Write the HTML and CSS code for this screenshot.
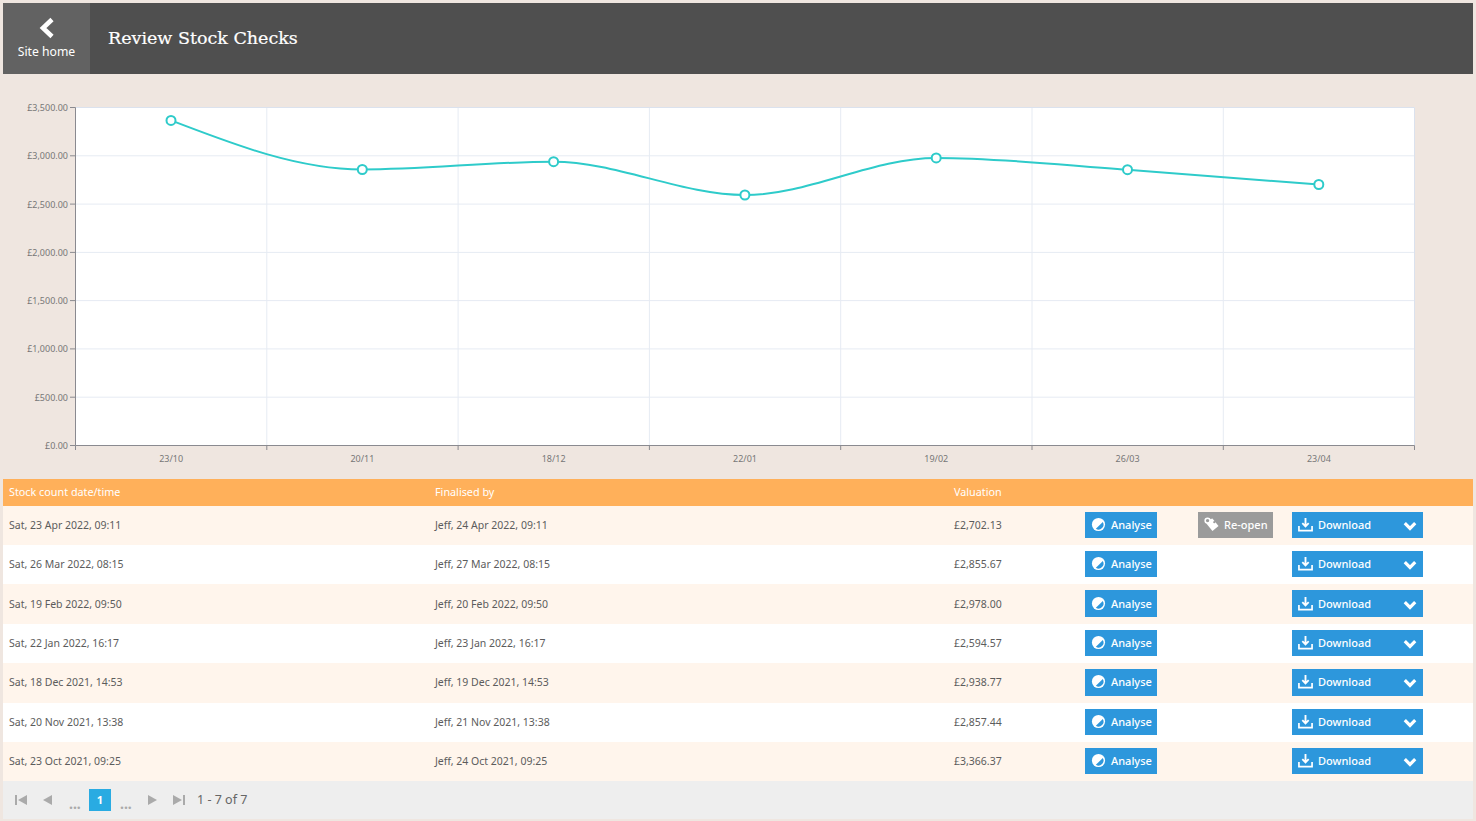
FILE: index.html
```html
<!DOCTYPE html>
<html lang="en">
<head>
<meta charset="utf-8">
<title>Review Stock Checks</title>
<link rel="stylesheet" href="styles.css">
</head>
<body>
<svg class="defs" width="0" height="0" aria-hidden="true">
  <symbol id="i-analyse" viewBox="0 0 16 16"><circle cx="8" cy="8" r="7" fill="#fff"/><path d="M12.6 5.2A5.4 5.4 0 0 1 5.2 12.6Z" fill="#2d97dc"/></symbol>
  <symbol id="i-tags" viewBox="0 0 16 16"><path d="M5 3 9 1.5 15.5 9.5 9 15 2.5 7Z" fill="#fff"/><circle cx="3.8" cy="3.8" r="2.6" fill="#9b9b9b" stroke="#fff" stroke-width="1.6"/><circle cx="11" cy="5.5" r="1.2" fill="#9b9b9b"/></symbol>
  <symbol id="i-download" viewBox="0 0 16 16"><path d="M8 1V9.5M4.6 6.6 8 10 11.4 6.6" fill="none" stroke="#fff" stroke-width="2"/><path d="M1 9.5V14.5H15V9.5" fill="none" stroke="#fff" stroke-width="1.8"/></symbol>
  <symbol id="i-chevron" viewBox="0 0 14 10"><path d="M1.8 2.2 7 7.4 12.2 2.2" fill="none" stroke="#fff" stroke-width="3.2"/></symbol>
</svg>

<header class="topbar">
  <a class="home" href="#">
    <svg class="home-icon" viewBox="0 0 16 22" width="16" height="22"><path d="M13 2.5 4 11 13 19.5" fill="none" stroke="#fff" stroke-width="4.6"/></svg>
    <span>Site home</span>
  </a>
  <h1 class="title">Review Stock Checks</h1>
</header>

<section class="chart">
  <svg class="chart-svg" width="1470" height="405" viewBox="3 74 1470 405">
    <rect class="plot" x="75.5" y="107.5" width="1339" height="338"/>
    <g class="grid">
      <path d="M75.5 155.8H1414.5M75.5 204.1H1414.5M75.5 252.4H1414.5M75.5 300.6H1414.5M75.5 348.9H1414.5M75.5 397.2H1414.5"/>
      <path d="M266.8 107.5V445.5M458.1 107.5V445.5M649.4 107.5V445.5M840.7 107.5V445.5M1032 107.5V445.5M1223.3 107.5V445.5"/>
      <path class="edge" d="M75.5 107.5H1414.5V445.5"/>
    </g>
    <g class="axis">
      <path d="M75.5 107.5V445.5H1414.5"/>
      <path d="M70 107.5H75.5M70 155.8H75.5M70 204.1H75.5M70 252.4H75.5M70 300.6H75.5M70 348.9H75.5M70 397.2H75.5M70 445.5H75.5"/>
      <path d="M75.5 445.5V450M266.8 445.5V450M458.1 445.5V450M649.4 445.5V450M840.7 445.5V450M1032 445.5V450M1223.3 445.5V450M1414.5 445.5V450"/>
    </g>
    <g class="ylabels">
      <text x="68" y="111">£3,500.00</text>
      <text x="68" y="159">£3,000.00</text>
      <text x="68" y="208">£2,500.00</text>
      <text x="68" y="256">£2,000.00</text>
      <text x="68" y="304">£1,500.00</text>
      <text x="68" y="352">£1,000.00</text>
      <text x="68" y="401">£500.00</text>
      <text x="68" y="449">£0.00</text>
    </g>
    <g class="xlabels">
      <text x="171.2" y="462">23/10</text>
      <text x="362.4" y="462">20/11</text>
      <text x="553.7" y="462">18/12</text>
      <text x="745" y="462">22/01</text>
      <text x="936.3" y="462">19/02</text>
      <text x="1127.6" y="462">26/03</text>
      <text x="1318.9" y="462">23/04</text>
    </g>
    <path class="line" d="M171 120.4C234.77 144.95 298.53 169.5 362.3 169.5C426.07 169.5 489.83 161.7 553.6 161.7C617.37 161.7 681.13 195 744.9 195C808.67 195 872.43 157.9 936.2 157.9C999.97 157.9 1063.73 165.26 1127.5 169.7C1191.27 174.14 1255.03 179.32 1318.8 184.5"/>
    <g class="dots">
      <circle cx="171" cy="120.4" r="4.5"/>
      <circle cx="362.3" cy="169.5" r="4.5"/>
      <circle cx="553.6" cy="161.7" r="4.5"/>
      <circle cx="744.9" cy="195" r="4.5"/>
      <circle cx="936.2" cy="157.9" r="4.5"/>
      <circle cx="1127.5" cy="169.7" r="4.5"/>
      <circle cx="1318.8" cy="184.5" r="4.5"/>
    </g>
  </svg>
</section>

<table class="grid-table">
  <colgroup>
    <col class="c-date"><col class="c-by"><col class="c-val"><col class="c-an"><col class="c-re"><col class="c-dl"><col>
  </colgroup>
  <thead>
    <tr><th>Stock count date/time</th><th>Finalised by</th><th>Valuation</th><th></th><th></th><th></th><th></th></tr>
  </thead>
  <tbody>
    <tr>
      <td>Sat, 23 Apr 2022, 09:11</td><td>Jeff, 24 Apr 2022, 09:11</td><td>£2,702.13</td>
      <td><a class="btn" href="#"><svg class="ic"><use href="#i-analyse"/></svg>Analyse</a></td>
      <td><a class="btn btn-grey" href="#"><svg class="ic"><use href="#i-tags"/></svg>Re-open</a></td>
      <td colspan="2"><a class="btn btn-dl" href="#"><svg class="ic"><use href="#i-download"/></svg>Download<svg class="chev"><use href="#i-chevron"/></svg></a></td>
    </tr>
    <tr>
      <td>Sat, 26 Mar 2022, 08:15</td><td>Jeff, 27 Mar 2022, 08:15</td><td>£2,855.67</td>
      <td><a class="btn" href="#"><svg class="ic"><use href="#i-analyse"/></svg>Analyse</a></td>
      <td></td>
      <td colspan="2"><a class="btn btn-dl" href="#"><svg class="ic"><use href="#i-download"/></svg>Download<svg class="chev"><use href="#i-chevron"/></svg></a></td>
    </tr>
    <tr>
      <td>Sat, 19 Feb 2022, 09:50</td><td>Jeff, 20 Feb 2022, 09:50</td><td>£2,978.00</td>
      <td><a class="btn" href="#"><svg class="ic"><use href="#i-analyse"/></svg>Analyse</a></td>
      <td></td>
      <td colspan="2"><a class="btn btn-dl" href="#"><svg class="ic"><use href="#i-download"/></svg>Download<svg class="chev"><use href="#i-chevron"/></svg></a></td>
    </tr>
    <tr>
      <td>Sat, 22 Jan 2022, 16:17</td><td>Jeff, 23 Jan 2022, 16:17</td><td>£2,594.57</td>
      <td><a class="btn" href="#"><svg class="ic"><use href="#i-analyse"/></svg>Analyse</a></td>
      <td></td>
      <td colspan="2"><a class="btn btn-dl" href="#"><svg class="ic"><use href="#i-download"/></svg>Download<svg class="chev"><use href="#i-chevron"/></svg></a></td>
    </tr>
    <tr>
      <td>Sat, 18 Dec 2021, 14:53</td><td>Jeff, 19 Dec 2021, 14:53</td><td>£2,938.77</td>
      <td><a class="btn" href="#"><svg class="ic"><use href="#i-analyse"/></svg>Analyse</a></td>
      <td></td>
      <td colspan="2"><a class="btn btn-dl" href="#"><svg class="ic"><use href="#i-download"/></svg>Download<svg class="chev"><use href="#i-chevron"/></svg></a></td>
    </tr>
    <tr>
      <td>Sat, 20 Nov 2021, 13:38</td><td>Jeff, 21 Nov 2021, 13:38</td><td>£2,857.44</td>
      <td><a class="btn" href="#"><svg class="ic"><use href="#i-analyse"/></svg>Analyse</a></td>
      <td></td>
      <td colspan="2"><a class="btn btn-dl" href="#"><svg class="ic"><use href="#i-download"/></svg>Download<svg class="chev"><use href="#i-chevron"/></svg></a></td>
    </tr>
    <tr>
      <td>Sat, 23 Oct 2021, 09:25</td><td>Jeff, 24 Oct 2021, 09:25</td><td>£3,366.37</td>
      <td><a class="btn" href="#"><svg class="ic"><use href="#i-analyse"/></svg>Analyse</a></td>
      <td></td>
      <td colspan="2"><a class="btn btn-dl" href="#"><svg class="ic"><use href="#i-download"/></svg>Download<svg class="chev"><use href="#i-chevron"/></svg></a></td>
    </tr>
  </tbody>
</table>

<nav class="pager">
  <svg class="pg" viewBox="0 0 12 12"><path d="M0 1H2V11H0ZM12 1V11L3 6Z"/></svg>
  <svg class="pg" viewBox="0 0 12 12"><path d="M10 1V11L1 6Z"/></svg>
  <span class="more">...</span>
  <span class="current">1</span>
  <span class="more more-after">...</span>
  <svg class="pg" viewBox="0 0 12 12"><path d="M2 1V11L11 6Z"/></svg>
  <svg class="pg" viewBox="0 0 12 12"><path d="M12 1H10V11H12ZM0 1V11L9 6Z"/></svg>
  <span class="info">1 - 7 of 7</span>
</nav>
</body>
</html>
```

FILE: styles.css
```css
* { box-sizing: border-box; }
html, body { height: 100%; }
body {
  margin: 0;
  padding: 3px;
  background: #efe6e0;
  font-family: "Noto Sans", "Liberation Sans", sans-serif;
  font-size: 10.5px;
  color: #5c5c5c;
  overflow: hidden;
}
.defs { position: absolute; }

.topbar {
  display: flex;
  align-items: center;
  height: 71px;
  background: #4f4f4f;
}
.home {
  display: flex;
  flex-direction: column;
  align-items: center;
  width: 87px;
  height: 100%;
  padding-top: 14px;
  background: #626262;
  color: #fff;
  font-size: 12.2px;
  line-height: 16px;
  text-decoration: none;
}
.home-icon { margin-bottom: 5px; }
.title {
  margin: 0 0 2px 18px;
  color: #fff;
  font-family: "DejaVu Serif", serif;
  font-size: 17.5px;
  font-weight: 400;
  -webkit-text-stroke: 0.2px #fff;
}

.chart { height: 405px; }
.chart-svg { display: block; }
.plot { fill: #fff; }
.grid path { fill: none; stroke: #e6ebf3; stroke-width: 1; }
.grid .edge { stroke: #dbe2ee; }
.axis path { fill: none; stroke: #8a8a90; stroke-width: 1; }
.ylabels text, .xlabels text { font-size: 9px; fill: #777; }
.ylabels text { text-anchor: end; }
.xlabels text { text-anchor: middle; }
.line { fill: none; stroke: #2ecbca; stroke-width: 2; }
.dots circle { fill: #fff; stroke: #2ecbca; stroke-width: 2; }

.grid-table {
  width: 1470px;
  border-collapse: collapse;
  table-layout: fixed;
}
.c-date { width: 426px; }
.c-by { width: 519px; }
.c-val { width: 131px; }
.c-an { width: 113px; }
.c-re { width: 94px; }
.grid-table th {
  height: 26.6px;
  padding: 0 6px 1px;
  background: #ffb05a;
  color: #fff;
  font-size: 10.8px;
  font-weight: 400;
  text-align: left;
}
.grid-table td {
  height: 39.4px;
  padding: 0 6px 0.8px;
  white-space: nowrap;
}
.grid-table tbody tr:nth-child(odd) { background: #fff5ec; }
.grid-table tbody tr:nth-child(even) { background: #fff; }

.btn {
  display: flex;
  align-items: center;
  height: 26.4px;
  width: 72px;
  padding: 0 6px 1px;
  background: #2d97dc;
  color: #fff;
  font-size: 11px;
  font-weight: 500;
  text-decoration: none;
}
.btn-grey { width: 75px; background: #9b9b9b; }
.btn-dl { width: 131px; }
.ic { width: 15px; height: 15px; margin-right: 5px; flex: none; }
.chev { width: 14px; height: 10px; margin-top: 3px; margin-left: auto; flex: none; }

.pager {
  display: flex;
  align-items: center;
  height: 38px;
  padding-left: 12px;
  background: #eee;
}
.pg { width: 12px; height: 12px; fill: #aaa; margin-right: 15px; }
.more { width: 12px; color: #aaa; font-size: 14px; font-weight: 700; line-height: 12px; margin-right: 8px; margin-top: 7px; }
.more-after { margin-right: 14px; }
.current {
  width: 22px;
  height: 22px;
  margin-right: 9px;
  background: #29abe2;
  color: #fff;
  font-size: 11px;
  font-weight: 700;
  line-height: 22px;
  text-align: center;
}
.info { font-size: 12.5px; color: #666; margin: 0 0 2px -3px; }
```
